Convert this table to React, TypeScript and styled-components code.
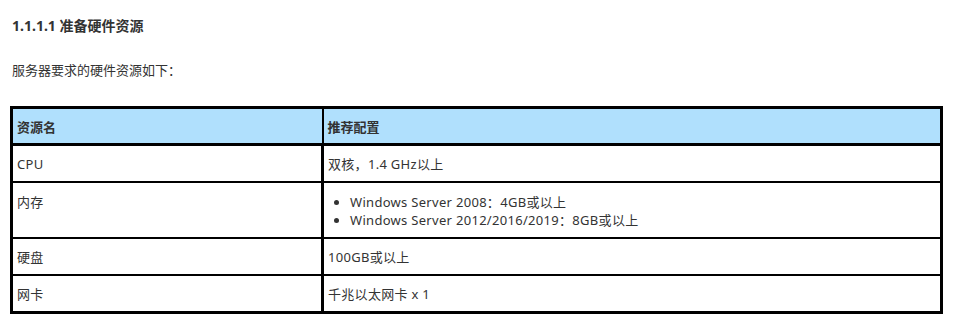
import React from 'react';
import styled, { createGlobalStyle } from 'styled-components';

const GlobalStyle = createGlobalStyle`
  body {
    margin: 0;
    background: #fff;
    font-family: "Noto Sans", "Noto Sans CJK SC", sans-serif;
    color: #333;
    font-size: 13px;
  }
`;

const Page = styled.div`
  padding: 16px 10px 0 12px;
`;

const Title = styled.h4`
  margin: 0;
  font-size: 14px;
  font-weight: bold;
  line-height: 20px;
`;

const Para = styled.p`
  margin: 24px 0 0;
  line-height: 20px;
`;

const Table = styled.table`
  margin: 26px 0 0 -2px;
  width: 933px;
  border-collapse: collapse;
  border: 3px solid #000;
`;

const HeadCell = styled.th`
  background: #b0e0fd;
  text-align: left;
  font-weight: bold;
  height: 34px;
  padding: 0 4px;
  border: 2px solid #000;
  border-bottom-width: 3px;
`;

const Cell = styled.td<{ $tall?: boolean }>`
  vertical-align: ${(p) => (p.$tall ? 'top' : 'middle')};
  height: ${(p) => (p.$tall ? '44px' : '35px')};
  padding: ${(p) => (p.$tall ? '10px 4px 0' : '0 4px')};
  border: 2px solid #000;
  line-height: 18px;
  letter-spacing: 0.3px;

  &:first-child {
    width: 300px;
    border-right-width: 3px;
  }
`;

const List = styled.ul`
  margin: 0;
  padding-left: 22px;
  line-height: 18px;
`;

const rows = [
  { name: 'CPU', value: '双核，1.4 GHz以上' },
  { name: '硬盘', value: '100GB或以上' },
  { name: '网卡', value: '千兆以太网卡 x 1' },
];

export default function App() {
  return (
    <Page>
      <GlobalStyle />
      <Title>1.1.1.1 准备硬件资源</Title>
      <Para>服务器要求的硬件资源如下：</Para>
      <Table>
        <thead>
          <tr>
            <HeadCell>资源名</HeadCell>
            <HeadCell>推荐配置</HeadCell>
          </tr>
        </thead>
        <tbody>
          <tr>
            <Cell>{rows[0].name}</Cell>
            <Cell>{rows[0].value}</Cell>
          </tr>
          <tr>
            <Cell $tall>内存</Cell>
            <Cell $tall>
              <List>
                <li>Windows Server 2008：4GB或以上</li>
                <li>Windows Server 2012/2016/2019：8GB或以上</li>
              </List>
            </Cell>
          </tr>
          {rows.slice(1).map((r) => (
            <tr key={r.name}>
              <Cell>{r.name}</Cell>
              <Cell>{r.value}</Cell>
            </tr>
          ))}
        </tbody>
      </Table>
    </Page>
  );
}
